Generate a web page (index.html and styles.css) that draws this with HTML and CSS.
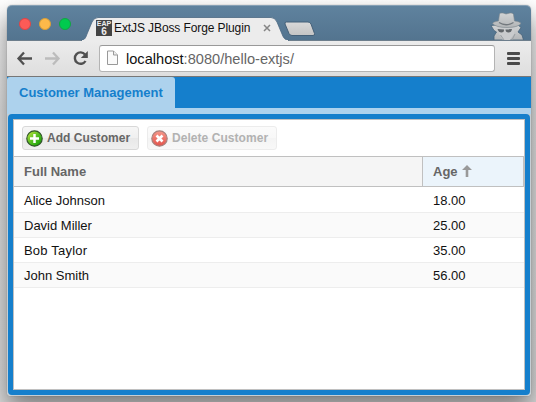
FILE: index.html
```html
<!DOCTYPE html>
<html lang="en">
<head>
<meta charset="utf-8">
<title>ExtJS JBoss Forge Plugin</title>
<link rel="stylesheet" href="styles.css">
</head>
<body>
<div class="window">
  <header class="titlebar">
    <div class="lights"><i class="light red"></i><i class="light amber"></i><i class="light green"></i></div>
    <div class="tab">
      <svg class="tab-shape" width="208" height="25" viewBox="0 0 208 25"><path d="M0 24.500C4 24 5 21 6 18L11 6Q13 1.500 17 1.500H190Q194 1.500 196 6L201 18C202.500 22 204 24 208 24.500V25H0Z" fill="#ececec" stroke="#4b6881" stroke-width=".8"/><path d="M1 24.500H207" stroke="#ececec"/></svg>
      <div class="favicon"><span>EAP</span><b>6</b></div>
      <span class="tab-title">ExtJS JBoss Forge Plugin</span>
      <svg class="tab-close" width="8" height="8" viewBox="0 0 8 8"><path d="M1 1L7 7M7 1L1 7" stroke="#858585" stroke-width="1.500"/></svg>
    </div>
    <svg class="new-tab" width="32" height="16" viewBox="0 0 32 16"><defs><linearGradient id="nt" x2="0" y2="1"><stop stop-color="#d9d9d9"/><stop offset="1" stop-color="#c4c4c4"/></linearGradient></defs><path d="M2.500 1H24Q26 1 27 3L30.500 12.500Q31 14.500 29 14.500H8Q6 14.500 5 12.500L1 3Q.5 1 2.500 1Z" fill="url(#nt)" stroke="#456078"/></svg>
    <svg class="incognito" width="36" height="29" viewBox="0 0 36 29"><defs><linearGradient id="ig" x2="0" y2="1"><stop stop-color="#d2d4d5"/><stop offset="1" stop-color="#b2b5b7"/></linearGradient></defs>
      <path d="M6 14L1 14.500L4 19.500L6.500 21L4 25V29H33.500L32 24L28 21L31 16.500L28 14Z" fill="url(#ig)" stroke="#48637a" stroke-width=".8"/>
      <path d="M7 15H25L24 23L20 29H13L9 23Z" fill="#c9cbcd"/>
      <path d="M8.500 10L9.500 3Q10 1.500 13 2L16 3L20 2Q23 1.500 23.500 3.500L24.500 10Q30 10.500 31 12.500Q28 16.500 17 16.500T2.500 12.500Q3.500 10.500 8.500 10Z" fill="url(#ig)" stroke="#7b858c" stroke-width=".6"/>
      <path d="M9 11.500Q16 16 23.500 11.500" fill="none" stroke="#73797e" stroke-width="1.300"/>
      <path d="M7.500 18L14 18.500Q14.500 21.500 11.500 21.500Q8.500 21.500 7.500 18ZM15.500 18.500L22 18Q21.500 21.500 18.500 21.500Q15.500 21.500 15.500 18.500Z" fill="#61666a"/><path d="M10.500 24L14 29M25 23L22 29" stroke="#999ea2"/></svg>
  </header>
  <nav class="navbar">
    <svg class="nav-icons" width="76" height="18" viewBox="0 0 76 18"><path d="M17 9.500H3.500M9 3.500L3.500 9.500L9 15.500" fill="none" stroke="#505050" stroke-width="2.300"/><path d="M30 9.500H43.500M38 3.500L43.500 9.500L38 15.500" fill="none" stroke="#bcbcbc" stroke-width="2.300"/><path d="M70 5.500A5.700 5.700 0 1 0 70.500 12" fill="none" stroke="#505050" stroke-width="2.400"/><path d="M72.800 2V9H65.800Z" fill="#505050"/></svg>
    <div class="address">
      <svg width="13" height="16" viewBox="0 0 13 16"><path d="M1.500 1H7.500L11.500 5V14.500H1.500Z" fill="#fafafa" stroke="#999"/><path d="M7.500 1V5H11.500" fill="#eee" stroke="#999"/></svg>
      <span class="url">localhost<span class="path">:8080/hello-extjs/</span></span>
    </div>
    <div class="menu"><i></i><i></i><i></i></div>
  </nav>
  <main class="app">
    <div class="app-tabs"><div class="app-tab"><span>Customer Management</span></div></div>
    <div class="panel-wrap">
      <section class="panel">
        <div class="tools">
          <div class="btn add"><svg width="17" height="17" viewBox="0 0 17 17"><defs><linearGradient id="ga" x2="1" y2="1"><stop stop-color="#cdea43"/><stop offset=".5" stop-color="#55be20"/><stop offset="1" stop-color="#069800"/></linearGradient></defs><circle cx="8.500" cy="8.500" r="7.700" fill="url(#ga)" stroke="#31552b" stroke-width="1.200"/><path d="M8.500 4V13M4 8.500H13" stroke="#fff" stroke-width="2.500"/></svg><span>Add Customer</span></div>
          <div class="btn delete"><svg width="17" height="17" viewBox="0 0 17 17"><defs><linearGradient id="gd" x2="0" y2="1"><stop stop-color="#f6988b"/><stop offset="1" stop-color="#e2534b"/></linearGradient></defs><circle cx="8.500" cy="8.500" r="7.700" fill="url(#gd)" stroke="#a7827e" stroke-width="1.200"/><path d="M5.500 5.500L11.500 11.500M11.500 5.500L5.500 11.500" stroke="#fff" stroke-width="2.600"/></svg><span>Delete Customer</span></div>
        </div>
        <div class="row head"><div class="name"><span>Full Name</span></div><div class="age"><span>Age</span><svg width="10" height="12" viewBox="0 0 10 12"><path d="M5 0L10 5H6.300V12H3.700V5H0Z" fill="#999"/></svg></div></div>
        <div class="row first"><div class="name">Alice Johnson</div><div class="age">18.00</div></div>
        <div class="row alt"><div class="name">David Miller</div><div class="age">25.00</div></div>
        <div class="row"><div class="name"><span class="bob">Bob Taylor</span></div><div class="age">35.00</div></div>
        <div class="row alt"><div class="name">John Smith</div><div class="age">56.00</div></div>
      </section>
    </div>
  </main>
</div>
</body>
</html>
```
FILE: styles.css
```css
* { box-sizing: border-box; }
body {
  margin: 0;
  height: 402px;
  padding: 5px 5px 0 7px;
  overflow: hidden;
  background: linear-gradient(#fff, #f4f4f4 30px, #e2e2e2 110px, #dcdcdc);
  font: 13px/1 "Liberation Sans", sans-serif;
  color: #111;
}
svg { display: block; flex: none; }
span { white-space: nowrap; }
.window {
  width: 524px;
  height: 391px;
  border-radius: 5px 5px 4px 4px;
  background: #fff;
  box-shadow: 0 0 1px rgba(0,0,0,.5), 0 12px 24px rgba(0,0,0,.45);
}
.titlebar {
  position: relative;
  height: 36px;
  display: flex;
  align-items: flex-end;
  border-radius: 5px 5px 0 0;
  border-top: 1px solid #86a0b5;
  border-bottom: 1px solid #6d7e8c;
  background: linear-gradient(#5f829e, #53748f);
}
.lights { display: flex; gap: 8px; padding-left: 12px; width: 74px; height: 22px; }
.light { width: 12px; height: 12px; border-radius: 50%; }
.red { background: #fc5b57; border: 1px solid #df4446; }
.amber { background: #fdb94a; border: 1px solid #dca035; }
.green { background: #00ca4e; border: 1px solid #10a642; }
.tab {
  position: relative;
  width: 208px;
  height: 25px;
  margin-bottom: -1px;
  display: flex;
  align-items: center;
  padding: 0 0 1px 15px;
}
.tab-shape { position: absolute; inset: 0; }
.tab > :not(.tab-shape) { position: relative; }
.favicon {
  width: 16px;
  height: 16px;
  background: #444;
  color: #eee;
  display: flex;
  flex-direction: column;
  align-items: center;
  font: bold 7px/7px "Liberation Sans", sans-serif;
}
.favicon b { font-size: 10px; line-height: 9px; }
.tab-title { margin-left: 2px; width: 137px; font-size: 12px; letter-spacing: -.1px; }
.tab-close { margin-left: 12px; }
.new-tab { margin: 0 0 3px -5px; }
.incognito { margin: 0 5px 0 auto; }
.navbar {
  height: 36px;
  display: flex;
  align-items: center;
  padding: 0 11px 1px 8px;
  border-bottom: 1px solid #777;
  background: linear-gradient(#ececec, #dedede);
}
.address {
  width: 396px;
  height: 27px;
  margin-left: 8px;
  display: flex;
  align-items: center;
  gap: 7px;
  padding-left: 6px;
  border: 1px solid #b4b4b4;
  border-top-color: #999;
  border-radius: 3px;
  background: #fff;
}
.url { font-size: 14.600px; padding-top: 2px; }
.path { color: #666; }
.menu { margin-left: auto; width: 13px; display: flex; flex-direction: column; gap: 2px; }
.menu i { height: 3px; border-radius: 1px; background: #4a4a4a; }
.app { height: 319px; }
.app-tabs { height: 31px; background: #157fcc; }
.app-tab {
  width: 168px;
  height: 31px;
  padding: 9px 0 0 12px;
  border-radius: 3px 3px 0 0;
  background: #add2ed;
  color: #157fcc;
  font-weight: bold;
}
.panel-wrap {
  height: 288px;
  padding: 6px 1px 1px;
  border-radius: 0 0 4px 4px;
  background: linear-gradient(#add2ed 6px, #c5ced4 6px);
}
.panel {
  height: 281px;
  border: 5px solid #157fcc;
  border-radius: 4px;
  background: #fff;
  box-shadow: inset 0 0 0 1px silver;
  padding: 1px;
}
.tools { height: 36px; padding: 6px 0 0 8px; display: flex; gap: 8px; }
.btn {
  height: 24px;
  display: flex;
  align-items: center;
  gap: 4px;
  padding-left: 3px;
  border: 1px solid #d8d8d8;
  border-radius: 3px;
  background: linear-gradient(#f6f6f6, #f0f0f0 48%, #e8e8e8 52%, #efefef);
  color: #666;
  font-size: 12px;
  font-weight: bold;
}
.add { width: 117px; }
.delete { width: 130px; border-color: #ececec; background: linear-gradient(#fbfbfb, #f8f8f8 48%, #f4f4f4 52%, #f8f8f8); color: #b2b2b2; }
.add span { letter-spacing: .04px; }
.delete span { letter-spacing: .05px; }
.row { height: 25px; display: flex; border-bottom: 1px solid #ededed; }
.row > div { display: flex; align-items: center; padding-left: 10px; padding-top: 1px; }
.row.first { height: 26px; }
.name { width: 409px; }
.age { flex: 1; }
.alt { background: #fafafa; }
.bob { letter-spacing: .2px; }
.row.head {
  height: 31px;
  border-top: 1px solid silver;
  border-bottom-color: silver;
  background: #f5f5f5;
  color: #666;
  font-weight: bold;
}
.head > div { padding-bottom: 1px; }
.head .name { border-right: 1px solid silver; }
.head .age { gap: 4px; background: #ebf4fb; border-right: 1px solid silver; }
.head svg { margin-top: -1px; }
```
